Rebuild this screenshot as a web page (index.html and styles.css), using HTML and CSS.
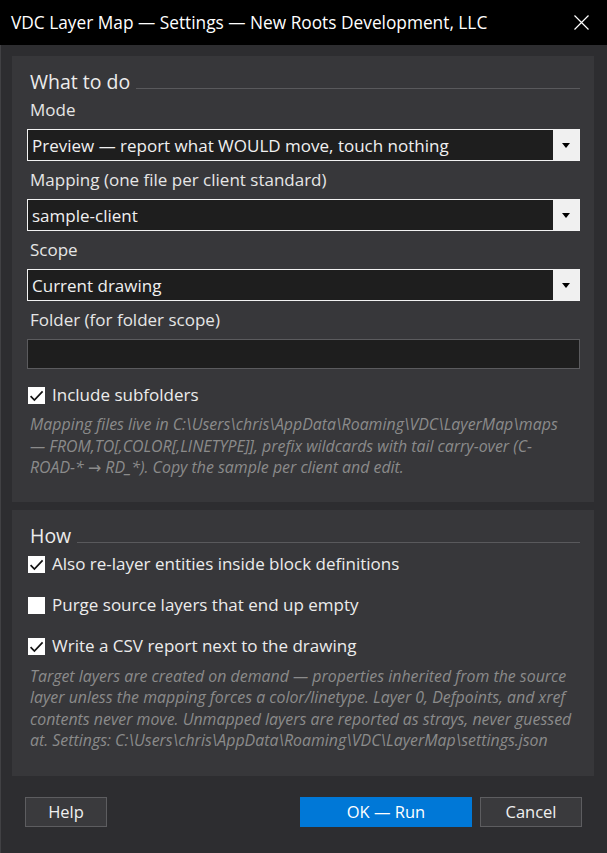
FILE: index.html
```html
<!DOCTYPE html>
<html lang="en">
<head>
<meta charset="utf-8">
<title>VDC Layer Map — Settings</title>
<link rel="stylesheet" href="styles.css">
</head>
<body>
<div class="window">
  <header class="titlebar">
    <span class="title">VDC Layer Map — Settings — New Roots Development, LLC</span>
    <span class="close" aria-label="Close">
      <svg width="15" height="15" viewBox="0 0 15 15"><path d="M0.5 0.5L14.5 14.5M14.5 0.5L0.5 14.5" stroke="#ffffff" stroke-width="1.2" fill="none"/></svg>
    </span>
  </header>
  <div class="body">
    <section class="panel panel-what">
      <div class="group-head"><span class="group-title">What to do</span><span class="rule"></span></div>
      <div class="field-label">Mode</div>
      <div class="select">
        <span class="select-value">Preview — report what WOULD move, touch nothing</span>
        <span class="select-btn"><svg width="8" height="5" viewBox="0 0 8 5"><path d="M0 0H8L4 5Z" fill="#000"/></svg></span>
      </div>
      <div class="field-label">Mapping (one file per client standard)</div>
      <div class="select">
        <span class="select-value">sample-client</span>
        <span class="select-btn"><svg width="8" height="5" viewBox="0 0 8 5"><path d="M0 0H8L4 5Z" fill="#000"/></svg></span>
      </div>
      <div class="field-label">Scope</div>
      <div class="select">
        <span class="select-value">Current drawing</span>
        <span class="select-btn"><svg width="8" height="5" viewBox="0 0 8 5"><path d="M0 0H8L4 5Z" fill="#000"/></svg></span>
      </div>
      <div class="field-label">Folder (for folder scope)</div>
      <div class="text-input"></div>
      <div class="check check-first">
        <span class="box"><svg width="17" height="17" viewBox="0 0 17 17"><path d="M2.6 9.2L6.4 13L14.6 4.4" stroke="#111" stroke-width="1.7" fill="none"/></svg></span>
        <span class="check-text">Include subfolders</span>
      </div>
      <p class="hint">
        <span class="hl">Mapping files live in C:\Users\chris\AppData\Roaming\VDC\LayerMap\maps</span>
        <span class="hl">— FROM,TO[,COLOR[,LINETYPE]], prefix wildcards with tail carry-over (C-</span>
        <span class="hl">ROAD-* → RD_*). Copy the sample per client and edit.</span>
      </p>
    </section>
    <section class="panel panel-how">
      <div class="group-head"><span class="group-title">How</span><span class="rule"></span></div>
      <div class="checks">
        <div class="check">
          <span class="box"><svg width="17" height="17" viewBox="0 0 17 17"><path d="M2.6 9.2L6.4 13L14.6 4.4" stroke="#111" stroke-width="1.7" fill="none"/></svg></span>
          <span class="check-text">Also re-layer entities inside block definitions</span>
        </div>
        <div class="check">
          <span class="box"></span>
          <span class="check-text">Purge source layers that end up empty</span>
        </div>
        <div class="check">
          <span class="box"><svg width="17" height="17" viewBox="0 0 17 17"><path d="M2.6 9.2L6.4 13L14.6 4.4" stroke="#111" stroke-width="1.7" fill="none"/></svg></span>
          <span class="check-text">Write a CSV report next to the drawing</span>
        </div>
      </div>
      <p class="hint hint-how">
        <span class="hl">Target layers are created on demand — properties inherited from the source</span>
        <span class="hl">layer unless the mapping forces a color/linetype. Layer 0, Defpoints, and xref</span>
        <span class="hl">contents never move. Unmapped layers are reported as strays, never guessed</span>
        <span class="hl">at. Settings: C:\Users\chris\AppData\Roaming\VDC\LayerMap\settings.json</span>
      </p>
    </section>
    <footer class="buttons">
      <span class="btn btn-help">Help</span>
      <span class="btn btn-ok">OK — Run</span>
      <span class="btn btn-cancel">Cancel</span>
    </footer>
  </div>
</div>
</body>
</html>
```

FILE: styles.css
```css
html, body {
  margin: 0;
  padding: 0;
  background: #2d2d30;
}

body {
  font-family: "Open Sans", "Noto Sans", "DejaVu Sans", sans-serif;
  color: #ececec;
}

.window {
  width: 607px;
  height: 853px;
  display: flex;
  flex-direction: column;
  overflow: hidden;
}

.titlebar {
  height: 45px;
  flex: none;
  background: #000000;
  display: flex;
  align-items: center;
  padding-left: 11px;
}

.title {
  font-size: 17.3px;
  line-height: 45px;
  color: #ffffff;
  white-space: nowrap;
}

.close {
  margin-left: auto;
  margin-right: 18px;
  width: 15px;
  height: 15px;
  display: flex;
}

.body {
  flex: 1;
  border-left: 1px solid #414144;
  padding: 11px 13px 0 11px;
  display: flex;
  flex-direction: column;
}

.panel {
  background: #37373a;
  padding: 13px 14px 0 15px;
}

.panel-what {
  padding-bottom: 23.5px;
}

.panel-how {
  margin-top: 8px;
  padding-bottom: 24px;
}

.group-head {
  display: flex;
  align-items: center;
  height: 26px;
  margin-bottom: 3px;
}

.group-title {
  font-size: 19.5px;
  line-height: 26px;
  color: #ececec;
  margin-left: 3px;
  white-space: nowrap;
}

.rule {
  flex: 1;
  height: 1px;
  background: #59595c;
  margin-left: 6px;
  margin-top: 13px;
}

.field-label {
  font-size: 17px;
  line-height: 24px;
  height: 24px;
  margin: 0 0 7px 3px;
  color: #e6e6e6;
  white-space: nowrap;
}

.select {
  height: 32px;
  box-sizing: border-box;
  border: 1px solid #f2f2f2;
  display: flex;
  margin-bottom: 7px;
}

.select-value {
  flex: 1;
  background: #1e1e1e;
  font-size: 17px;
  line-height: 28px;
  padding: 2px 0 0 4px;
  color: #f0f0f0;
  white-space: nowrap;
}

.select-btn {
  width: 26px;
  background: #f0f0f0;
  display: flex;
  align-items: center;
  justify-content: center;
}

.text-input {
  height: 30px;
  box-sizing: border-box;
  border: 1px solid #5b5b5e;
  background: #1e1e1e;
}

.check {
  display: flex;
  align-items: center;
  height: 24px;
  gap: 7px;
  padding-left: 1px;
}

.check-first {
  margin-top: 14px;
}

.checks {
  display: flex;
  flex-direction: column;
  gap: 17px;
  margin-top: 0.5px;
}

.box {
  width: 17px;
  height: 17px;
  background: #ffffff;
  display: flex;
  flex: none;
}

.check-text {
  font-size: 17px;
  line-height: 24px;
  color: #ececec;
  white-space: nowrap;
}

.hint {
  margin: 7px 0 0 3px;
  font-size: 15.9px;
  line-height: 21.5px;
  font-style: italic;
  color: #8b8b8b;
}

.hint-how {
  margin-top: 7.5px;
}

.hl {
  display: block;
  white-space: nowrap;
}

.buttons {
  margin-top: 21px;
  display: flex;
  padding: 0 12px 0 13px;
  gap: 8px;
}

.btn {
  height: 30px;
  box-sizing: border-box;
  font-size: 16.5px;
  line-height: 28px;
  text-align: center;
  color: #f0f0f0;
  background: #3a3a3d;
  border: 1px solid #5d5d60;
}

.btn-help {
  width: 82px;
}

.btn-ok {
  width: 172px;
  margin-left: auto;
  background: #0078d7;
  border-color: #0078d7;
  color: #ffffff;
}

.btn-cancel {
  width: 102px;
}
```
